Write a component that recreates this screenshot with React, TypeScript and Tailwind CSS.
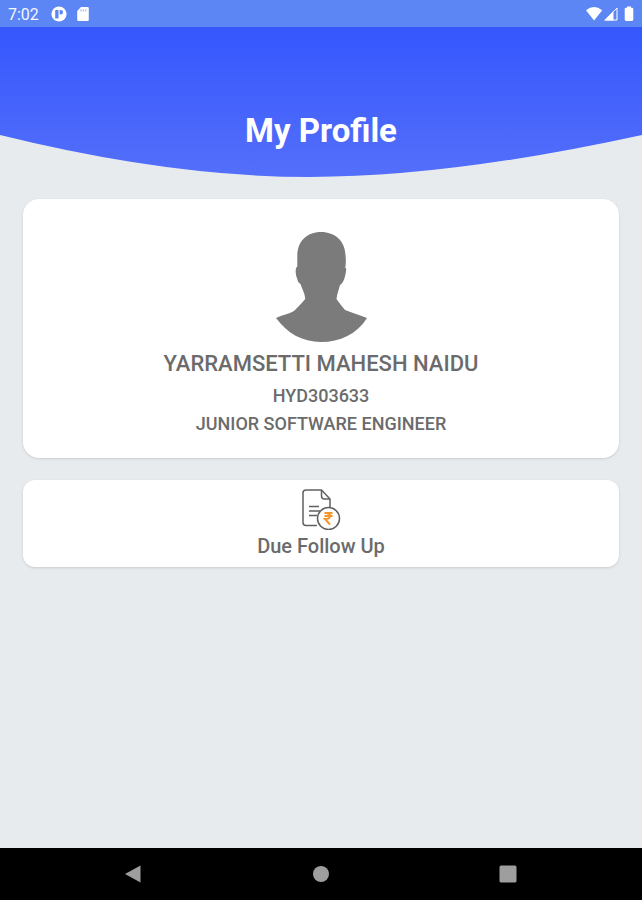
function StatusBar() {
  return (
    <div className="flex h-[27px] items-center justify-between bg-[#5b86f4] px-2 text-[#f4f7ff]">
      <div className="flex items-center gap-3">
        <span className="pt-0.5 text-base">7:02</span>
        <svg className="h-4 w-4" viewBox="0 0 16 16">
          <circle cx="8" cy="8" r="7.6" fill="#fff" />
          <path d="M4.2 4h3.3v8.4H4.2z" fill="#5b86f4" />
          <path d="M8.7 4h1a2.3 2.3 0 0 1 0 4.6h-1z" fill="#5b86f4" />
        </svg>
        <svg className="-ml-1 h-4 w-4" viewBox="0 0 16 16">
          <path
            d="M6 1h6.5a1.3 1.3 0 0 1 1.3 1.3v11.4a1.3 1.3 0 0 1-1.3 1.3h-9a1.3 1.3 0 0 1-1.3-1.3V5z"
            fill="#fff"
          />
          <path d="M6 3.2v2.3M8.4 3.2v2.3M10.8 3.2v2.3" stroke="#9db7fa" strokeWidth="1.1" />
        </svg>
      </div>
      <svg className="h-4 w-12" viewBox="0 0 48 16">
        <path d="M0 4.2Q8 -2.2 16.2 4.2L8.1 14.5z" fill="#fff" />
        <path d="M27.5 5v9.5H18z" fill="#fff" />
        <path d="M31 2v12H19.2z" fill="none" stroke="#fff" />
        <path
          d="M41 .5h4v1.3h1a1.3 1.3 0 0 1 1.3 1.3v10.5a1.3 1.3 0 0 1-1.3 1.3h-6a1.3 1.3 0 0 1-1.3-1.3V3.1A1.3 1.3 0 0 1 40 1.8h1z"
          fill="#fff"
        />
      </svg>
    </div>
  );
}

function Header() {
  return (
    <header className="relative h-[150px]">
      <svg
        className="absolute inset-0 h-full w-full"
        viewBox="0 0 642 150"
        preserveAspectRatio="none"
      >
        <defs>
          <linearGradient id="header" x1="0" y1="0" x2="0" y2="1">
            <stop offset="0" stopColor="#3557fe" />
            <stop offset="1" stopColor="#546ffa" />
          </linearGradient>
        </defs>
        <path d="M0 0H642V108Q450 150 310 150Q170 150 0 108z" fill="url(#header)" />
      </svg>
      <h1 className="relative pt-[84px] text-center text-[33px] leading-10 font-bold text-white">
        My Profile
      </h1>
    </header>
  );
}

function Avatar() {
  return (
    <svg className="h-[110px] w-24" viewBox="0 0 96 110" fill="#7b7b7b">
      <path d="M48 0C34 0 24.3 9 24.3 24C24.3 28 24.3 31 24.3 34.5C21.8 36 22.5 43 24.3 47C24.8 50 26 51 27.5 52C29 57 32 61 32.2 67C29 71 25 75 21 79C16 82 9 83 3 86C14 101 29 110 48 110C67 110 84 102 94 86C87 83 79 81 72 78C69 74 66 71 63.5 67C64 62 66 57 67 53C71 51 72.5 43 73.2 38C73.2 36.5 73 36 72.3 36C73 31 73 28 72.5 23C72 9 62 0 48 0z" />
    </svg>
  );
}

function DueIcon() {
  return (
    <svg className="h-[42px] w-10" viewBox="0 0 40 42" fill="none" stroke="#606060" strokeWidth="1.5">
      <path d="M16 37.5H5Q2 37.5 2 34.5V5Q2 2 5 2H20.5L29 11V20" />
      <path d="M20.5 2V8Q20.5 11 23.5 11H29" />
      <path d="M8 18.5H18M8 23H19M8 27.5H16" />
      <circle cx="27.5" cy="30.5" r="11" fill="#fff" />
      <path
        d="M23.5 25H31.5M23.5 28H31.5M24.5 25C30.5 25 30.5 31 24.5 31H24L29 36.5"
        stroke="#f5962a"
        strokeWidth="2"
      />
    </svg>
  );
}

function NavBar() {
  return (
    <nav className="flex h-[52px] items-center justify-center gap-[163px] bg-black">
      <button aria-label="Back">
        <svg className="h-6 w-6" viewBox="0 0 24 24" fill="#9e9e9e">
          <path d="M3 12L18.5 3.5V20.5z" />
        </svg>
      </button>
      <button aria-label="Home">
        <svg className="h-6 w-6" viewBox="0 0 24 24" fill="#9e9e9e">
          <circle cx="12" cy="12" r="8" />
        </svg>
      </button>
      <button aria-label="Recent apps">
        <svg className="h-6 w-6" viewBox="0 0 24 24" fill="#9e9e9e">
          <rect x="3.5" y="3.5" width="17" height="17" rx="1.5" />
        </svg>
      </button>
    </nav>
  );
}

export default function App() {
  return (
    <div className="flex min-h-screen flex-col bg-[#e7ebee] font-[Roboto,sans-serif]">
      <StatusBar />
      <Header />
      <main className="flex flex-1 flex-col gap-[22px] px-[23px] pt-[22px] text-[#6b6b6b]">
        <section className="flex flex-col items-center rounded-2xl bg-white pt-[33px] pb-5 text-center font-medium shadow-sm">
          <Avatar />
          <h2 className="mt-1 text-[22px] leading-9">YARRAMSETTI MAHESH NAIDU</h2>
          <p className="text-lg leading-7">HYD303633</p>
          <p className="text-lg leading-7">JUNIOR SOFTWARE ENGINEER</p>
        </section>
        <button className="flex flex-col items-center rounded-xl bg-white pt-2 pb-[5px] font-medium shadow-sm">
          <DueIcon />
          <span className="text-xl leading-8">Due Follow Up</span>
        </button>
      </main>
      <NavBar />
    </div>
  );
}
